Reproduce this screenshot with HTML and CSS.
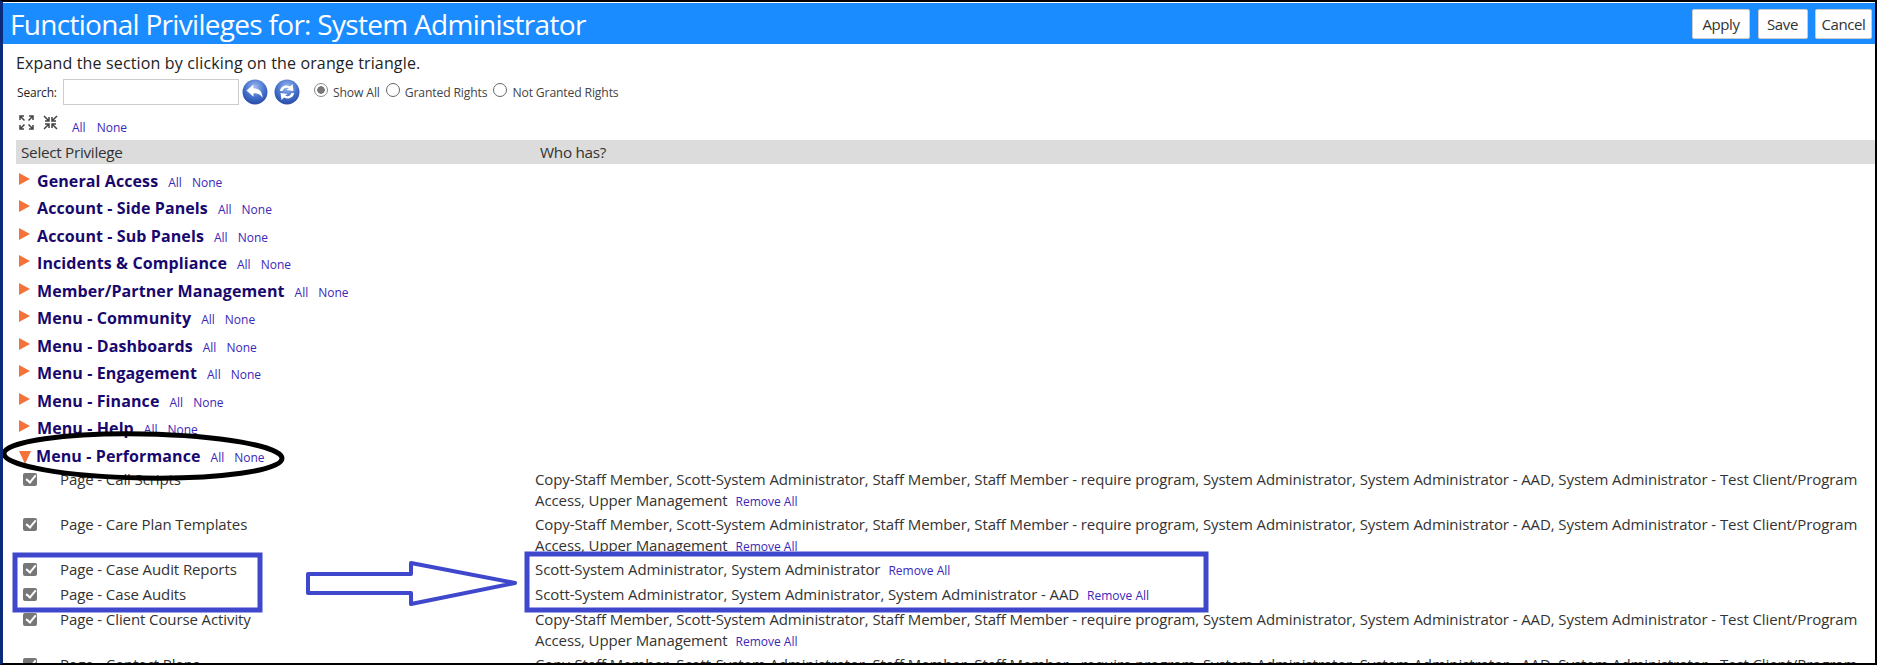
FILE: index.html
```html
<!DOCTYPE html>
<html lang="en">
<head>
  <meta charset="UTF-8">
  <title>Functional Privileges</title>
  <link rel="stylesheet" href="styles.css">
</head>
<body>
  <div class="frame">
    <div class="title-bar">
      <h1>Functional Privileges for: System Administrator</h1>
      <div class="title-buttons">
        <button class="btn-apply">Apply</button>
        <button class="btn-save">Save</button>
        <button class="btn-cancel">Cancel</button>
      </div>
    </div>

    <div class="intro">Expand the section by clicking on the orange triangle.</div>

    <div class="search-row">
      <label class="search-label">Search:</label>
      <input class="search-input" type="text">
      <svg class="round-icon" width="26" height="26" viewBox="0 0 26 26">
        <defs>
          <radialGradient id="glossy" cx="50%" cy="30%" r="75%">
            <stop offset="0" stop-color="#9dbaf0"/>
            <stop offset="0.55" stop-color="#4470cc"/>
            <stop offset="1" stop-color="#23459f"/>
          </radialGradient>
        </defs>
        <circle cx="13" cy="13" r="12.5" fill="url(#glossy)"/>
        <path d="M4.5 11.5 L11.5 5.5 V9.2 C17 9.2 20.5 12.5 20.5 19 C18.5 15.5 16 14.3 11.5 14.3 V17.8 Z" fill="#fff"/>
      </svg>
      <svg class="round-icon" width="26" height="26" viewBox="0 0 26 26">
        <circle cx="13" cy="13" r="12.5" fill="url(#glossy)"/>
        <path d="M6 12 C6.5 7.5 11.5 5 16 7.5 L18.5 5 L19.5 12 L12.5 11 L14.8 9.2 C12 8 9.5 9.3 8.5 12 Z" fill="#fff"/>
        <path d="M20 14 C19.5 18.5 14.5 21 10 18.5 L7.5 21 L6.5 14 L13.5 15 L11.2 16.8 C14 18 16.5 16.7 17.5 14 Z" fill="#fff"/>
      </svg>
      <div class="radio-group">
        <span class="radio radio-on"></span><span class="radio-text">Show All</span>
        <span class="radio"></span><span class="radio-text">Granted Rights</span>
        <span class="radio"></span><span class="radio-text">Not Granted Rights</span>
      </div>
    </div>

    <div class="tree-tools">
      <svg class="tool-icon" width="15" height="15" viewBox="0 0 15 15">
        <path d="M1 5 V1 H5 M1 1 L5.5 5.5 M14 5 V1 H10 M14 1 L9.5 5.5 M1 10 V14 H5 M1 14 L5.5 9.5 M14 10 V14 H10 M14 14 L9.5 9.5"/>
      </svg>
      <svg class="tool-icon" width="15" height="15" viewBox="0 0 15 15">
        <path d="M2 6 H6 V2 M6 6 L1 1 M13 6 H9 V2 M9 6 L14 1 M2 9 H6 V13 M6 9 L1 14 M13 9 H9 V13 M9 9 L14 14"/>
      </svg>
      <a class="mini-link tool-all">All</a>
      <a class="mini-link tool-none">None</a>
    </div>

    <div class="table-head">
      <div class="head-select">Select Privilege</div>
      <div>Who has?</div>
    </div>

    <div class="section-list">
      <div class="section"><span class="tri"></span><span class="section-name">General Access</span><a class="mini-link">All</a><a class="mini-link">None</a></div>
      <div class="section"><span class="tri"></span><span class="section-name">Account - Side Panels</span><a class="mini-link">All</a><a class="mini-link">None</a></div>
      <div class="section"><span class="tri"></span><span class="section-name">Account - Sub Panels</span><a class="mini-link">All</a><a class="mini-link">None</a></div>
      <div class="section"><span class="tri"></span><span class="section-name">Incidents &amp; Compliance</span><a class="mini-link">All</a><a class="mini-link">None</a></div>
      <div class="section"><span class="tri"></span><span class="section-name">Member/Partner Management</span><a class="mini-link">All</a><a class="mini-link">None</a></div>
      <div class="section"><span class="tri"></span><span class="section-name">Menu - Community</span><a class="mini-link">All</a><a class="mini-link">None</a></div>
      <div class="section"><span class="tri"></span><span class="section-name">Menu - Dashboards</span><a class="mini-link">All</a><a class="mini-link">None</a></div>
      <div class="section"><span class="tri"></span><span class="section-name">Menu - Engagement</span><a class="mini-link">All</a><a class="mini-link">None</a></div>
      <div class="section"><span class="tri"></span><span class="section-name">Menu - Finance</span><a class="mini-link">All</a><a class="mini-link">None</a></div>
      <div class="section"><span class="tri"></span><span class="section-name">Menu - Help</span><a class="mini-link">All</a><a class="mini-link">None</a></div>
      <div class="section"><span class="tri tri-open"></span><span class="section-name">Menu - Performance</span><a class="mini-link">All</a><a class="mini-link">None</a></div>
    </div>

    <div class="priv-list">
      <div class="priv-row">
        <span class="check"></span>
        <div class="priv-name">Page - Call Scripts</div>
        <div class="priv-who">Copy-Staff Member, Scott-System Administrator, Staff Member, Staff Member - require program, System Administrator, System Administrator - AAD, System Administrator - Test Client/Program Access, Upper Management<a class="mini-link">Remove All</a></div>
      </div>
      <div class="priv-row">
        <span class="check"></span>
        <div class="priv-name">Page - Care Plan Templates</div>
        <div class="priv-who">Copy-Staff Member, Scott-System Administrator, Staff Member, Staff Member - require program, System Administrator, System Administrator - AAD, System Administrator - Test Client/Program Access, Upper Management<a class="mini-link">Remove All</a></div>
      </div>
      <div class="priv-row">
        <span class="check"></span>
        <div class="priv-name">Page - Case Audit Reports</div>
        <div class="priv-who">Scott-System Administrator, System Administrator<a class="mini-link">Remove All</a></div>
      </div>
      <div class="priv-row">
        <span class="check"></span>
        <div class="priv-name">Page - Case Audits</div>
        <div class="priv-who">Scott-System Administrator, System Administrator, System Administrator - AAD<a class="mini-link">Remove All</a></div>
      </div>
      <div class="priv-row">
        <span class="check"></span>
        <div class="priv-name">Page - Client Course Activity</div>
        <div class="priv-who">Copy-Staff Member, Scott-System Administrator, Staff Member, Staff Member - require program, System Administrator, System Administrator - AAD, System Administrator - Test Client/Program Access, Upper Management<a class="mini-link">Remove All</a></div>
      </div>
      <div class="priv-row">
        <span class="check"></span>
        <div class="priv-name">Page - Contact Plans</div>
        <div class="priv-who">Copy-Staff Member, Scott-System Administrator, Staff Member, Staff Member - require program, System Administrator, System Administrator - AAD, System Administrator - Test Client/Program Access, Upper Management<a class="mini-link">Remove All</a></div>
      </div>
    </div>

    <!-- hand drawn markup on top of the screenshot -->
    <svg class="markup" width="1877" height="665" viewBox="0 0 1877 665">
      <ellipse class="mark-black" cx="143" cy="456" rx="139" ry="22" transform="rotate(1 143 456)"/>
      <rect class="mark-blue" x="15" y="555" width="245" height="55"/>
      <rect class="mark-blue" x="527" y="554" width="679" height="56"/>
      <path class="mark-arrow" d="M308 574 H411 V563 L515 583 L411 604 V593 H308 Z"/>
    </svg>
  </div>
</body>
</html>
```

FILE: styles.css
```css
* {
  box-sizing: border-box;
}
html, body {
  margin: 0;
  height: 665px;
  overflow: hidden;
}
body {
  background: #fff;
  font-family: "Open Sans", "Noto Sans", Arial, sans-serif;
  color: #222;
}
.frame {
  position: relative;
  height: 665px;
  overflow: hidden;
  background: #fff;
  border-top: 2px solid #000;
  border-left: 3px solid #0a2a7a;
  border-right: 2px solid #000;
  border-bottom: 2px solid #000;
}
.title-bar {
  display: flex;
  align-items: center;
  justify-content: space-between;
  height: 42px;
  border-top: 1px solid #fff;
  background: #1a8cff;
  padding: 0 3px 0 7px;
}
.title-bar h1 {
  margin: 0;
  color: #fff;
  font-size: 28px;
  font-weight: 400;
  letter-spacing: -0.7px;
  white-space: nowrap;
}
.title-buttons {
  display: flex;
  gap: 7.5px;
}
.title-buttons button {
  height: 30px;
  padding: 0;
  background: #fff;
  border: 1px solid #ccc;
  border-radius: 2px;
  color: #333;
  font-family: inherit;
  font-size: 15px;
  letter-spacing: -0.4px;
}
.btn-apply {
  width: 58px;
}
.btn-save {
  width: 50px;
}
.btn-cancel {
  width: 57px;
}
.intro {
  margin: 8px 0 0 13px;
  line-height: 22px;
  font-size: 16px;
  letter-spacing: 0.15px;
}
.search-row {
  display: flex;
  align-items: center;
  height: 28px;
  margin: 4px 0 0 14px;
}
.search-label {
  width: 46px;
  font-size: 12px;
  letter-spacing: -0.2px;
}
.search-input {
  width: 176px;
  height: 26px;
  background: #fff;
  border: 1px solid #ccc;
  margin-right: 3px;
}
.round-icon {
  margin-right: 6px;
}
.radio-group {
  display: flex;
  align-items: center;
  margin-left: 8px;
}
.radio {
  width: 14px;
  height: 14px;
  border: 1px solid #666;
  border-radius: 50%;
  background: #fff;
  margin-bottom: 5px;
}
.radio-on {
  border-color: #888;
  background: radial-gradient(circle, #777 0 3.5px, #fff 4px);
}
.radio-text {
  margin: 0 6px 0 5px;
  color: #444;
  font-size: 12.2px;
  letter-spacing: -0.15px;
  padding-top: 1px;
}
.tree-tools {
  display: flex;
  align-items: flex-start;
  height: 28px;
  margin: 6px 0 0 16px;
  padding-top: 3px;
}
.tool-icon {
  margin-right: 9px;
  fill: none;
  stroke: #444;
  stroke-width: 1.5;
}
.mini-link {
  margin-left: 10px;
  color: #3b27b8;
  font-size: 12px;
  cursor: pointer;
}
.tool-all {
  margin-left: 5px;
  margin-top: 4px;
}
.tool-none {
  margin-left: 11px;
  margin-top: 4px;
}
.table-head {
  display: flex;
  align-items: center;
  height: 24px;
  margin-left: 13px;
  background: #dcdcdc;
  font-size: 15.3px;
  letter-spacing: -0.3px;
  color: #333;
}
.head-select {
  width: 524px;
  padding-left: 5px;
}
.section-list {
  margin: 3.5px 0 0 16px;
}
.section {
  display: flex;
  align-items: baseline;
  height: 27.5px;
  line-height: 27px;
}
.tri {
  align-self: flex-start;
  width: 0;
  height: 0;
  margin: 5px 7px 0 0;
  border-top: 6px solid transparent;
  border-bottom: 6px solid transparent;
  border-left: 11px solid #f4733a;
}
.tri-open {
  margin: 8px 5px 0 0;
  border-left: 6.5px solid transparent;
  border-right: 6.5px solid transparent;
  border-top: 13px solid #f4733a;
  border-bottom: 0;
}
.section-name {
  color: #18086e;
  font-size: 16px;
  font-weight: 700;
  letter-spacing: 0.1px;
}
.priv-list {
  margin: -2px 0 0 20px;
}
.priv-row {
  display: flex;
  align-items: flex-start;
  min-height: 25px;
  padding: 1px 0;
  line-height: 21px;
  font-size: 15px;
  letter-spacing: -0.1px;
  color: #333;
}
.check {
  position: relative;
  flex: none;
  width: 14px;
  height: 13px;
  margin: 4px 23px 0 0;
  background: #777;
  border-radius: 2px;
}
.check::after {
  content: "";
  position: absolute;
  left: 3px;
  top: 2px;
  width: 8px;
  height: 4px;
  border-left: 2px solid #fff;
  border-bottom: 2px solid #fff;
  transform: rotate(-50deg);
}
.priv-name {
  flex: none;
  width: 475px;
}
.priv-who {
  flex: none;
  width: 1325px;
}
.priv-who .mini-link {
  margin-left: 8px;
  letter-spacing: 0;
}
.markup {
  position: absolute;
  left: -3px;
  top: -2px;
  pointer-events: none;
}
.mark-black {
  fill: none;
  stroke: #000;
  stroke-width: 5;
}
.mark-blue {
  fill: none;
  stroke: #3f48cc;
  stroke-width: 5;
}
.mark-arrow {
  fill: #fff;
  stroke: #3f48cc;
  stroke-width: 4;
  stroke-linejoin: round;
}
```
